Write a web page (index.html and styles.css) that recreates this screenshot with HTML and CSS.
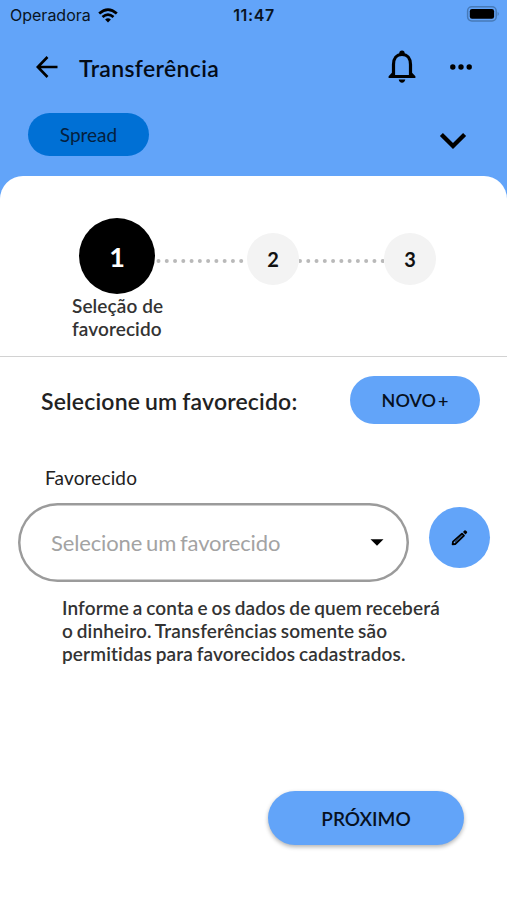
FILE: index.html
```html
<!DOCTYPE html>
<html lang="pt-BR">
<head>
<meta charset="utf-8">
<meta name="viewport" content="width=device-width, initial-scale=1">
<title>Transferência</title>
<link rel="stylesheet" href="styles.css">
</head>
<body>
<header class="header">
  <div class="status">
    <div class="carrier"><span>Operadora</span>
      <svg width="20" height="15" viewBox="0 0 20 15" fill="none" stroke="#000" stroke-width="2.7"><path d="M1.2 5.6Q10-2.4 18.8 5.6"/><path d="M4.5 9Q10 4.2 15.5 9"/><path d="M7.1 11.4Q10 9 12.9 11.4L10 14.5Z" fill="#000" stroke="none"/></svg>
    </div>
    <time class="clock">11:47</time>
    <svg class="battery" width="34" height="16" viewBox="0 0 34 16"><rect x="1.6" y=".8" width="28.6" height="14.2" rx="4.2" fill="none" stroke="#477ab8" stroke-width="1.5"/><rect x="3.8" y="3" width="24.3" height="9.8" rx="2.2"/><path d="M31.6 5.7Q34 7.8 31.6 10Z" fill="#477ab8"/></svg>
  </div>
  <div class="titlebar">
    <svg class="back" width="22" height="22" viewBox="0 0 22 22" fill="none" stroke="#000" stroke-width="2.6"><path d="M21.5 11H2M11.5 1L1.8 11L11.5 21"/></svg>
    <h1 class="title">Transferência</h1>
    <svg class="bell" width="28" height="34" viewBox="0 0 28 34"><path d="M5.5 26V14.5C5.5 8.5 8.5 4.5 14 4.5S22.5 8.5 22.5 14.5V26" fill="none" stroke="#000" stroke-width="3.2"/><circle cx="14" cy="3.3" r="2.7"/><path d="M4.2 22.5L.6 26.2V28H27.4V26.2L23.8 22.5L22 25H6Z"/><path d="M10.7 29.6H17.3Q16.8 32.7 14 32.7T10.7 29.6Z"/></svg>
    <svg class="more" width="22" height="6" viewBox="0 0 22 6"><circle cx="2.8" cy="3" r="2.7"/><circle cx="11" cy="3" r="2.7"/><circle cx="19.2" cy="3" r="2.7"/></svg>
  </div>
  <div class="account">
    <span class="chip">Spread</span>
    <svg class="chevron" width="28" height="18" viewBox="0 0 28 18" fill="none" stroke="#000" stroke-width="4.3"><path d="M2.4 2.4L14 14L25.6 2.4"/></svg>
  </div>
</header>
<main class="sheet">
  <section class="steps">
    <div class="track">
      <div class="step current">1</div>
      <svg class="dots" width="92" height="4"><path d="M3.5 2H90" /></svg>
      <div class="step">2</div>
      <svg class="dots" width="85" height="4"><path d="M1 2H84.5" /></svg>
      <div class="step">3</div>
    </div>
    <p class="step-label">Seleção de<br>favorecido</p>
  </section>
  <section class="chooser">
    <h2 class="question">Selecione um favorecido:</h2>
    <button class="btn new">NOVO +</button>
  </section>
  <label class="field-label">Favorecido</label>
  <div class="field-row">
    <div class="select"><span class="placeholder">Selecione um favorecido</span>
      <svg width="14" height="7" viewBox="0 0 14 7"><path d="M.5 .3H13.5L7 6.7Z"/></svg>
    </div>
    <button class="edit" aria-label="Editar">
      <svg width="17" height="17" viewBox="0 0 17 17"><path d="M1.6 15.3L2 12.7L11 4.6L13 6.6L4.2 15Z" fill="none" stroke="#000" stroke-width="1.8" stroke-linejoin="round"/><path d="M4.1 13L11.6 5.8" stroke="#000" stroke-width=".7"/><path d="M12 3L13.4 1.6Q14.2.9 15 1.700L15.900 2.600Q16.600 3.400 15.900 4.100L14.500 5.500Z"/></svg>
    </button>
  </div>
  <p class="hint">Informe a conta e os dados de quem receberá<br>o dinheiro. Transferências somente são<br>permitidas para favorecidos cadastrados.</p>
  <footer class="actions"><button class="btn next">PRÓXIMO</button></footer>
</main>
</body>
</html>
```
FILE: styles.css
```css
* { box-sizing: border-box; margin: 0; padding: 0; }
html { background: #62a4f9; }
body { width: 507px; height: 900px; display: flex; flex-direction: column; overflow: hidden; font-family: Lato, sans-serif; font-variant-ligatures: none; color: #000; background: #62a4f9; }
svg { display: block; flex: none; }
button { border: 0; font: inherit; color: #07111f; background: #62a4f9; }
.header { height: 176px; flex: none; }
.status { height: 30px; display: grid; grid-template-columns: 1fr auto 1fr; align-items: center; padding: 0 7px 0 10px; font-family: Inter, sans-serif; color: #091422; }
.carrier { display: flex; align-items: center; gap: 7px; font-size: 16px; }
.clock { font-size: 16px; font-weight: 600; letter-spacing: .6px; margin-right: 2px; }
.battery { justify-self: end; margin-top: -2px; }
.titlebar { height: 76px; display: flex; align-items: center; padding: 0 35px 2px 36px; }
.title { margin: 2px 0 0 21px; font-size: 23px; line-height: 28px; font-weight: 600; letter-spacing: .35px; color: #040c18; }
.bell { margin-left: auto; }
.more { margin-left: 34px; }
.account { display: flex; align-items: center; justify-content: space-between; padding: 7px 40px 0 28px; }
.chip { width: 121px; height: 43px; border-radius: 22px; background: #0070d5; display: flex; align-items: center; justify-content: center; font-size: 19px; color: #04203f; }
.chevron { margin-top: 12px; }
.sheet { flex: 1; background: #fff; border-radius: 23px 23px 0 0; }
.steps { height: 181px; border-bottom: 1px solid #d2d2d2; padding-top: 42px; }
.track { display: flex; align-items: center; height: 76px; padding-left: 79px; }
.step { width: 52px; height: 52px; margin-top: 5px; border-radius: 50%; background: #f3f3f3; display: flex; align-items: center; justify-content: center; font-size: 20px; font-weight: 700; color: #111; flex: none; }
.current { width: 76px; height: 76px; margin-top: 0; background: #000; color: #fff; font-size: 27px; }
.dots { margin-top: 9px; fill: none; stroke: #b9b9b9; stroke-width: 4; stroke-linecap: round; stroke-dasharray: 0 8.27; }
.step-label { margin-left: 72px; font-size: 19px; line-height: 23px; font-weight: 600; letter-spacing: .1px; color: #333; }
.chooser { display: flex; justify-content: space-between; align-items: center; padding: 19px 27px 0 41px; }
.question { margin-top: 1px; font-size: 23px; font-weight: 600; letter-spacing: .18px; word-spacing: -1px; color: #222; }
.btn { border-radius: 30px; font-weight: 600; font-size: 18px; }
.new { width: 130px; height: 48px; word-spacing: -2.5px; }
.field-label { display: block; margin: 42px 0 0 45px; font-size: 19px; line-height: 24px; letter-spacing: .15px; color: #222; }
.field-row { display: flex; align-items: center; justify-content: space-between; padding: 13px 17px 0 18px; }
.select { width: 391px; height: 79px; box-shadow: inset 0 0 0 2.5px #9b9b9b; border-radius: 40px; display: flex; align-items: center; justify-content: space-between; padding: 0 25px 1px 33px; }
.placeholder { font-size: 22px; letter-spacing: -.15px; word-spacing: -1.5px; color: #a3a3a3; }
.edit { width: 61px; height: 61px; margin-bottom: 10px; border-radius: 50%; display: flex; align-items: center; justify-content: center; }
.hint { margin: 14px 0 0 62px; font-size: 19px; line-height: 23px; font-weight: 600; letter-spacing: .14px; word-spacing: -1.1px; color: #333; white-space: nowrap; }
.actions { display: flex; justify-content: flex-end; padding: 126px 43px 0 0; }
.next { width: 196px; height: 54px; font-size: 19px; box-shadow: 0 2px 4px rgba(0, 0, 0, .3); }
```
